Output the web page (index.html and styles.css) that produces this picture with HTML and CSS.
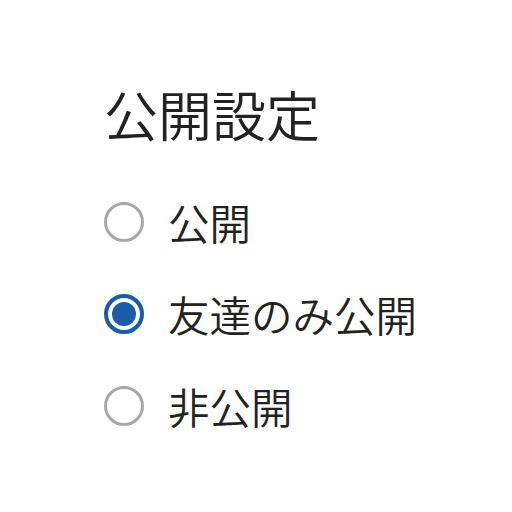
FILE: index.html
```html
<!DOCTYPE html>
<html lang="ja">
<head>
    <meta charset="UTF-8">
    <meta name="viewport" content="width=device-width, initial-scale=1.0">
    <title>公開設定</title>
    <link rel="stylesheet" href="styles.css">
</head>
<body>

    <main class="panel">
        <h1>公開設定</h1>
        <form class="options">
            <label class="option">
                <input type="radio" name="visibility" value="public">
                <span class="radio"></span>
                <span class="label-text">公開</span>
            </label>
            <label class="option">
                <input type="radio" name="visibility" value="friends" checked>
                <span class="radio"></span>
                <span class="label-text">友達のみ公開</span>
            </label>
            <label class="option">
                <input type="radio" name="visibility" value="private">
                <span class="radio"></span>
                <span class="label-text">非公開</span>
            </label>
        </form>
    </main>

</body>
</html>
```

FILE: styles.css
```css
body {
    font-family: "Noto Sans CJK JP", "Noto Sans", sans-serif;
    background-color: #fff;
    color: #222;
    margin: 0;
}

.panel {
    padding: 82px 0 0 104px;
}

h1 {
    font-size: 54px;
    font-weight: 350;
    line-height: 64px;
    margin: 0 0 46px;
}

.options {
    display: flex;
    flex-direction: column;
    gap: 32px;
}

.option {
    display: flex;
    align-items: center;
    gap: 24px;
    height: 60px;
    cursor: pointer;
}

.option input {
    display: none;
}

.radio {
    width: 40px;
    height: 40px;
    box-sizing: border-box;
    border: 3px solid #a8a8a8;
    border-radius: 50%;
    display: flex;
    justify-content: center;
    align-items: center;
}

.option input:checked + .radio {
    border: 4px solid #1a5ca6;
}

.option input:checked + .radio::after {
    content: "";
    width: 24px;
    height: 24px;
    border-radius: 50%;
    background-color: #1a5ca6;
}

.label-text {
    font-size: 41.5px;
    font-weight: 350;
    line-height: 60px;
}
```
